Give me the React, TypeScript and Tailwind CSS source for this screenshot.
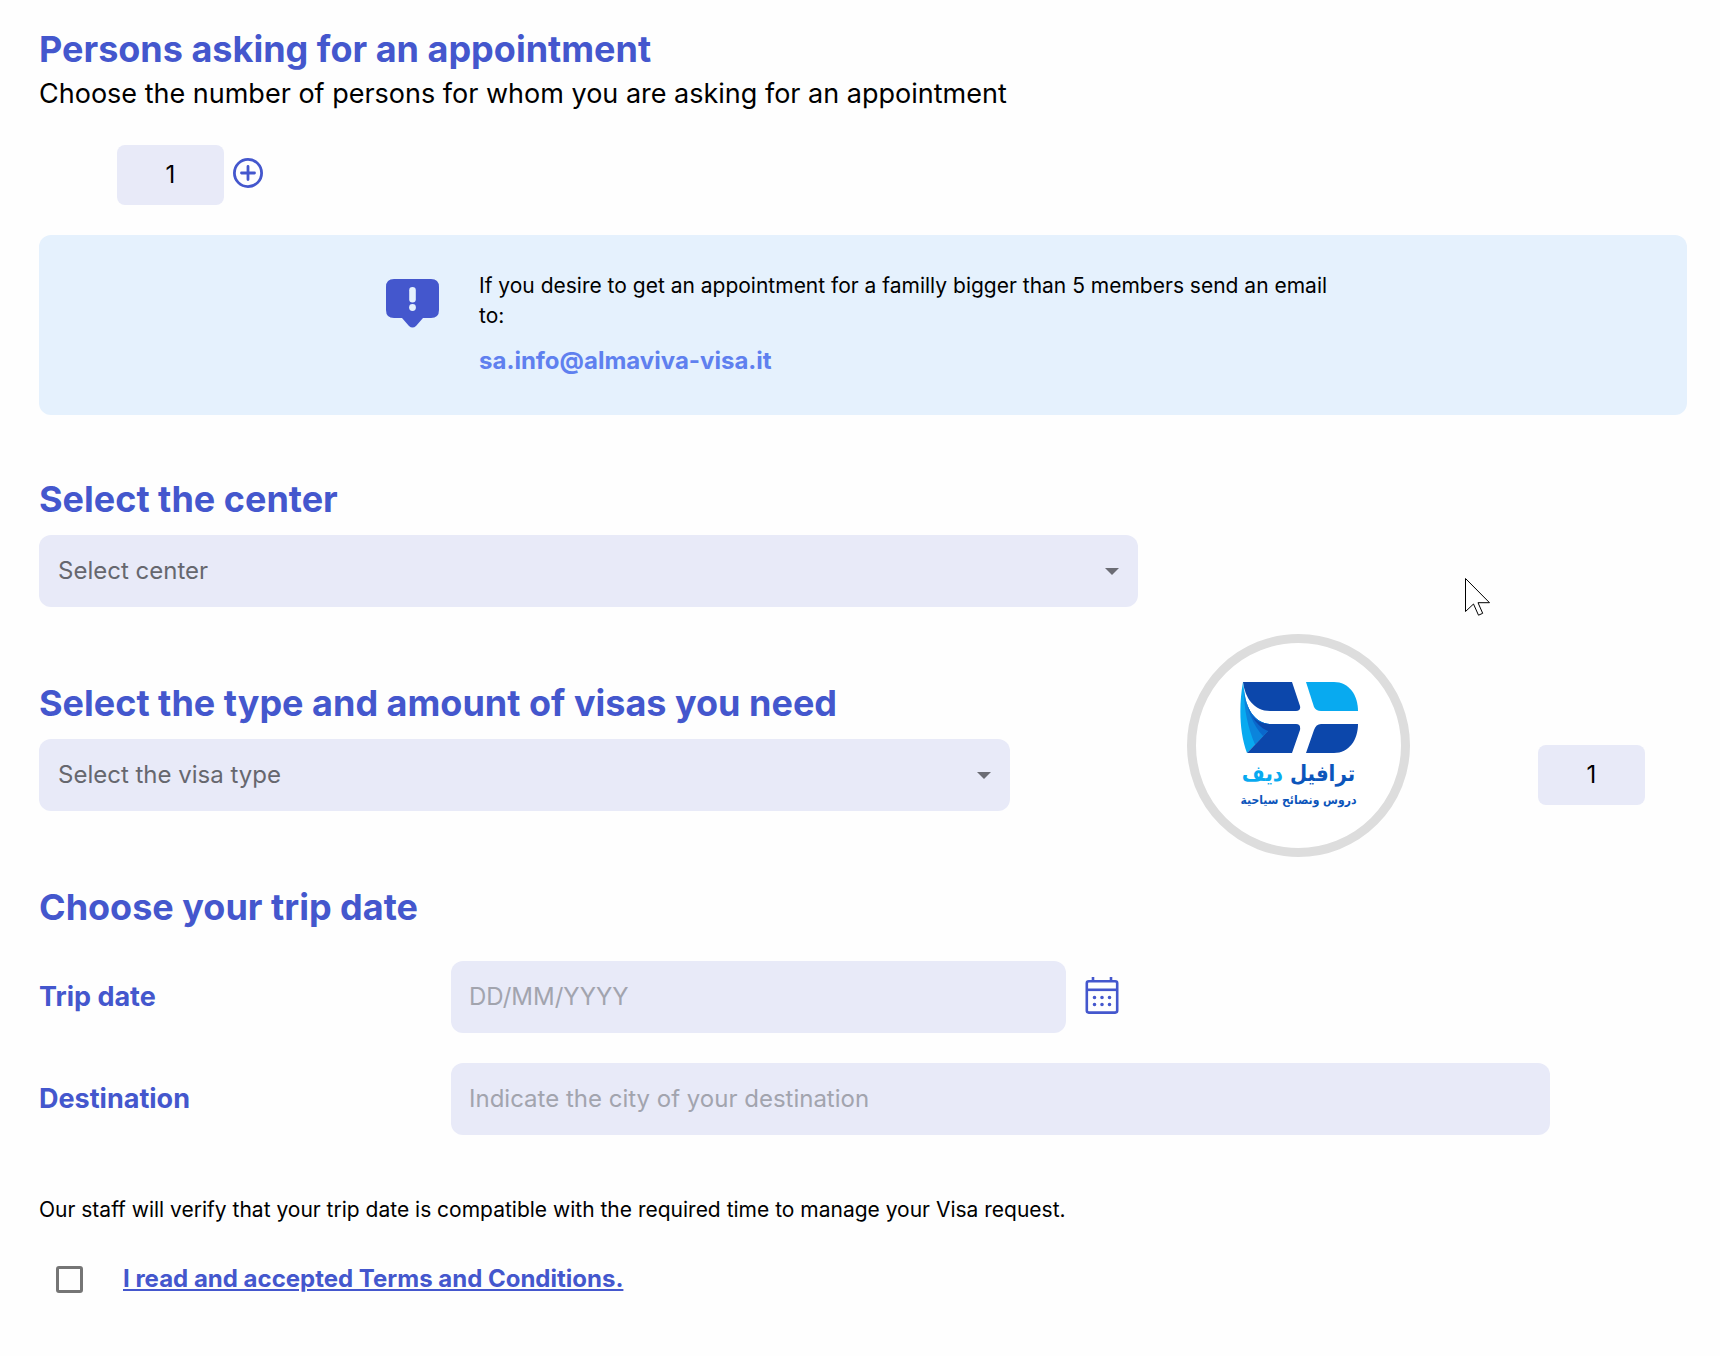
import { useState } from "react";

function Heading({ children }: { children: React.ReactNode }) {
    return <h2 className="text-4xl leading-[44px] font-bold text-[#4457cd]">{children}</h2>;
}

function SelectBox({ id, label, width }: { id: string; label: string; width: string }) {
    return (
        <div className={`relative ${width}`}>
            <select
                id={id}
                aria-label={label}
                className="block h-[72px] w-full appearance-none rounded-xl bg-[#e8eaf8] px-[19px] text-2xl text-[#66676e] outline-none"
            >
                <option>{label}</option>
            </select>
            <svg className="pointer-events-none absolute top-[33px] right-[19px] h-[7px] w-[14px]" viewBox="0 0 14 7">
                <path d="M0 0h14L7 7z" fill="#6b6c74" />
            </svg>
        </div>
    );
}

function Logo() {
    return (
        <div className="absolute top-[634px] left-[1187px] flex h-[223px] w-[223px] flex-col items-center rounded-full border-9 border-[#dddddd] bg-white pt-[39px]">
            <svg className="h-[72px] w-[118px]" viewBox="0 0 118 72">
                <path d="M3 0H52L60 24Q61 29 56 29H30C14 29 5 16 3 0Z" fill="#0c47ab" />
                <path d="M3 0C-1 22 -1 50 7 71L29 48L30 42C14 41 6 26 4 8Z" fill="#08aaf0" />
                <path d="M4 8C4 28 8 46 15 62.500L29 48L30 42C14 41 6 26 4 8Z" fill="#0b84dc" />
                <path d="M4 8C7 28 13 43 23 54L29 48L30 42C14 41 6 26 4 8Z" fill="#0a68cc" />
                <path d="M7 71L28 49C21 46 16 41 12 34C17 40 23 42 31 42H56Q61 42 60 48L52 71Z" fill="#0c47ab" />
                <path d="M66 0H94C109 0 118 13 118 29H81Q76 29 74 25Z" fill="#08aaf0" />
                <path d="M66 71L74 48Q76 42 81 42H118C118 58 109 71 94 71Z" fill="#0c47ab" />
            </svg>
            <p dir="rtl" className="mt-1 font-['DejaVu_Sans_Condensed','DejaVu_Sans',sans-serif] text-[22px] leading-8 font-bold whitespace-nowrap text-[#0c55bb]">
                ترافيل <span className="text-[#08aaf0]">ديف</span>
            </p>
            <p dir="rtl" className="font-['DejaVu_Sans_Condensed','DejaVu_Sans',sans-serif] text-xs leading-5 font-bold whitespace-nowrap text-[#0c55bb]">
                دروس ونصائح سياحية
            </p>
        </div>
    );
}

export default function App() {
    const [persons, setPersons] = useState(1);

    return (
        <main className="relative min-h-screen bg-[#fefefe] pt-[27px] pr-[33px] pb-10 pl-[39px] font-['Inter',sans-serif] text-black">
            <section>
                <Heading>Persons asking for an appointment</Heading>
                <p className="pt-px text-[27px] leading-[44px]">
                    Choose the number of persons for whom you are asking for an appointment
                </p>
                <div className="mt-[29px] ml-[78px] flex gap-[9px]">
                    <output className="flex h-[60px] w-[107px] items-center justify-center rounded-lg bg-[#e8eaf8] text-2xl">
                        {persons}
                    </output>
                    <button type="button" aria-label="Add person" className="mb-1" onClick={() => setPersons(Math.min(persons + 1, 5))}>
                        <svg className="block h-[30px] w-[30px]" viewBox="0 0 30 30" fill="none" stroke="#4457cd">
                            <circle cx="15" cy="15" r="13.6" strokeWidth="2.8" />
                            <path d="M15 8.500v13M8.500 15h13" strokeWidth="2.800" strokeLinecap="round" />
                        </svg>
                    </button>
                </div>
            </section>

            <section className="mt-[30px] flex h-[180px] gap-10 rounded-xl bg-[#e5f1fd] pt-9 pl-[347px]">
                <svg className="mt-2 h-[49px] w-[53px] shrink-0" viewBox="0 0 53 49">
                    <path
                        d="M8 0H45Q53 0 53 8V31Q53 39 45 39H37L30 47Q26.500 50 23 47L16 39H8Q0 39 0 31V8Q0 0 8 0Z"
                        fill="#4457cd"
                    />
                    <rect x="23.200" y="8" width="6.600" height="15.500" rx="3.300" fill="#e5f1fd" />
                    <circle cx="26.500" cy="28.500" r="3.400" fill="#e5f1fd" />
                </svg>
                <div className="w-[860px]">
                    <p className="text-[21px] leading-[30px]">
                        If you desire to get an appointment for a familly bigger than 5 members send an email to:
                    </p>
                    <a href="mailto:sa.info@almaviva-visa.it" className="mt-[15px] block text-2xl leading-[30px] font-bold text-[#5f80ef]">
                        sa.info@almaviva-visa.it
                    </a>
                </div>
            </section>

            <section className="mt-[62px]">
                <Heading>Select the center</Heading>
                <div className="mt-[14px]">
                    <SelectBox id="center" label="Select center" width="w-2/3" />
                </div>
            </section>

            <section className="mt-[74px]">
                <Heading>Select the type and amount of visas you need</Heading>
                <div className="mt-[14px] flex items-center justify-between pr-[42px]">
                    <SelectBox id="visa" label="Select the visa type" width="w-[971px]" />
                    <output className="flex h-[60px] w-[107px] items-center justify-center rounded-lg bg-[#e8eaf8] text-2xl">1</output>
                </div>
            </section>

            <section className="mt-[74px]">
                <Heading>Choose your trip date</Heading>
                <div className="mt-8 flex items-center">
                    <label htmlFor="trip_date" className="w-1/4 text-[27px] font-bold text-[#4457cd]">Trip date</label>
                    <input type="text" id="trip_date" placeholder="DD/MM/YYYY" className="h-[72px] w-[615px] rounded-xl bg-[#e8eaf8] px-[18px] pb-0.5 text-2xl outline-none placeholder:text-[#a2a4ae]" />
                    <button type="button" aria-label="Open calendar" className="ml-[19px] pb-1">
                        <svg className="block h-[37px] w-[34px]" viewBox="0 0 33 37" fill="none" stroke="#4457cd">
                            <rect x="1.300" y="4.200" width="30.400" height="31.400" rx="2" strokeWidth="2.600" />
                            <path d="M1 12.800h31" strokeWidth="2.600" />
                            <path d="M7.500 0v5M25.500 0v5" strokeWidth="2.600" />
                            <path d="M9 20.500h.01M16.500 20.500h.01M24 20.500h.01M9 27.500h.01M16.500 27.500h.01M24 27.500h.01" strokeWidth="3.600" strokeLinecap="round" />
                        </svg>
                    </button>
                </div>
                <div className="mt-[30px] flex items-center">
                    <label htmlFor="destination" className="w-1/4 text-[27px] font-bold text-[#4457cd]">Destination</label>
                    <input type="text" id="destination" placeholder="Indicate the city of your destination" className="h-[72px] w-2/3 rounded-xl bg-[#e8eaf8] px-[18px] pb-0.5 text-2xl outline-none placeholder:text-[#a2a4ae]" />
                </div>
            </section>

            <p className="mt-[60px] text-[21px] leading-[30px]">
                Our staff will verify that your trip date is compatible with the required time to manage your Visa request.
            </p>
            <div className="mt-[39px] ml-[17px] flex items-center gap-10">
                <input type="checkbox" id="terms" aria-labelledby="terms_link" className="h-[27px] w-[27px] appearance-none rounded-[3px] border-3 border-[#757575] checked:bg-[#4457cd]" />
                <a id="terms_link" href="#terms" className="text-2xl leading-[30px] font-bold text-[#4457cd] underline">
                    I read and accepted Terms and Conditions.
                </a>
            </div>

            <Logo />
            <svg className="pointer-events-none absolute top-[578px] left-[1465px] h-[38px] w-[26px]" viewBox="0 0 26 38">
                <path d="M.5.5V33.500L8.500 26L13.500 37.200L17.700 35.300L13 24.700H24.500Z" fill="#fff" stroke="#000" />
            </svg>
        </main>
    );
}
